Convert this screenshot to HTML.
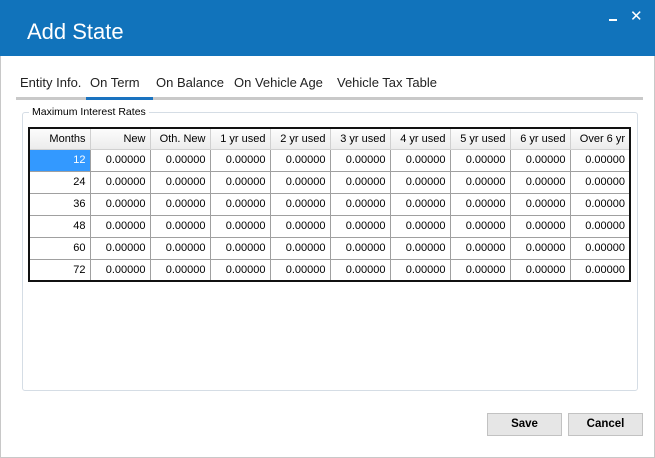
<!DOCTYPE html>
<html><head><style>
*{margin:0;padding:0;box-sizing:border-box}
body{width:655px;height:458px;background:#fff;font-family:"Liberation Sans",sans-serif;position:relative;overflow:hidden}
.win{position:absolute;left:0;top:0;width:655px;height:458px;border:1px solid #c8c8c8;border-top:none}
.title{position:absolute;left:0;top:0;width:655px;height:56px;background:#1173bb}
.title span{position:absolute;left:27px;top:19px;color:#fff;font-size:22px;font-weight:300}
.min{position:absolute;left:609px;top:19px;width:8px;height:2px;background:#fff}
.x{position:absolute;left:630px;top:7px;color:#fff;font-size:15px}
.tabs{position:absolute;top:75px;font-size:13px;color:#222}
.gline{position:absolute;left:16px;top:97px;width:627px;height:3px;background:#c9c9c9}
.bline{position:absolute;left:86px;top:97px;width:67px;height:3px;background:#1a73c0}
.group{position:absolute;left:22px;top:112px;width:616px;height:279px;border:1px solid #d5dde5;border-radius:3px}
.glabel{position:absolute;left:29px;top:106px;background:#fff;font-size:10.5px;padding:0 3px;color:#000}
table{position:absolute;left:28px;top:127px;border-collapse:collapse;border:2px solid #111;font-size:11px}
td{width:60px;height:22px;border:1px solid #a0a0a0;text-align:right;padding-right:4px;color:#000}
tr.h td{background:linear-gradient(#fcfcfc,#ececec);border-color:#d0d0d0;height:21px}
td.sel{background:#3399ff;color:#fff}
td:first-child{width:61px}
.btn{position:absolute;top:413px;width:75px;height:23px;background:#e6e6e6;border:1px solid #c2c2c2;font-size:11.5px;font-weight:bold;text-align:center;line-height:21px}
</style></head><body>
<div class="win"></div>
<div class="title"><span>Add State</span><div class="min"></div><div class="x">✕</div></div>
<div class="tabs" style="left:20px">Entity Info.</div>
<div class="tabs" style="left:90px">On Term</div>
<div class="tabs" style="left:156px">On Balance</div>
<div class="tabs" style="left:234px">On Vehicle Age</div>
<div class="tabs" style="left:337px">Vehicle Tax Table</div>
<div class="gline"></div><div class="bline"></div>
<div class="group"></div>
<div class="glabel">Maximum Interest Rates</div>
<table>
<tr class="h"><td>Months</td><td>New</td><td>Oth. New</td><td>1 yr used</td><td>2 yr used</td><td>3 yr used</td><td>4 yr used</td><td>5 yr used</td><td>6 yr used</td><td>Over 6 yr</td></tr>
<tr><td class="sel">12</td><td>0.00000</td><td>0.00000</td><td>0.00000</td><td>0.00000</td><td>0.00000</td><td>0.00000</td><td>0.00000</td><td>0.00000</td><td>0.00000</td></tr>
<tr><td>24</td><td>0.00000</td><td>0.00000</td><td>0.00000</td><td>0.00000</td><td>0.00000</td><td>0.00000</td><td>0.00000</td><td>0.00000</td><td>0.00000</td></tr>
<tr><td>36</td><td>0.00000</td><td>0.00000</td><td>0.00000</td><td>0.00000</td><td>0.00000</td><td>0.00000</td><td>0.00000</td><td>0.00000</td><td>0.00000</td></tr>
<tr><td>48</td><td>0.00000</td><td>0.00000</td><td>0.00000</td><td>0.00000</td><td>0.00000</td><td>0.00000</td><td>0.00000</td><td>0.00000</td><td>0.00000</td></tr>
<tr><td>60</td><td>0.00000</td><td>0.00000</td><td>0.00000</td><td>0.00000</td><td>0.00000</td><td>0.00000</td><td>0.00000</td><td>0.00000</td><td>0.00000</td></tr>
<tr><td>72</td><td>0.00000</td><td>0.00000</td><td>0.00000</td><td>0.00000</td><td>0.00000</td><td>0.00000</td><td>0.00000</td><td>0.00000</td><td>0.00000</td></tr>
</table>
<div class="btn" style="left:487px">Save</div>
<div class="btn" style="left:568px">Cancel</div>
</body></html>
